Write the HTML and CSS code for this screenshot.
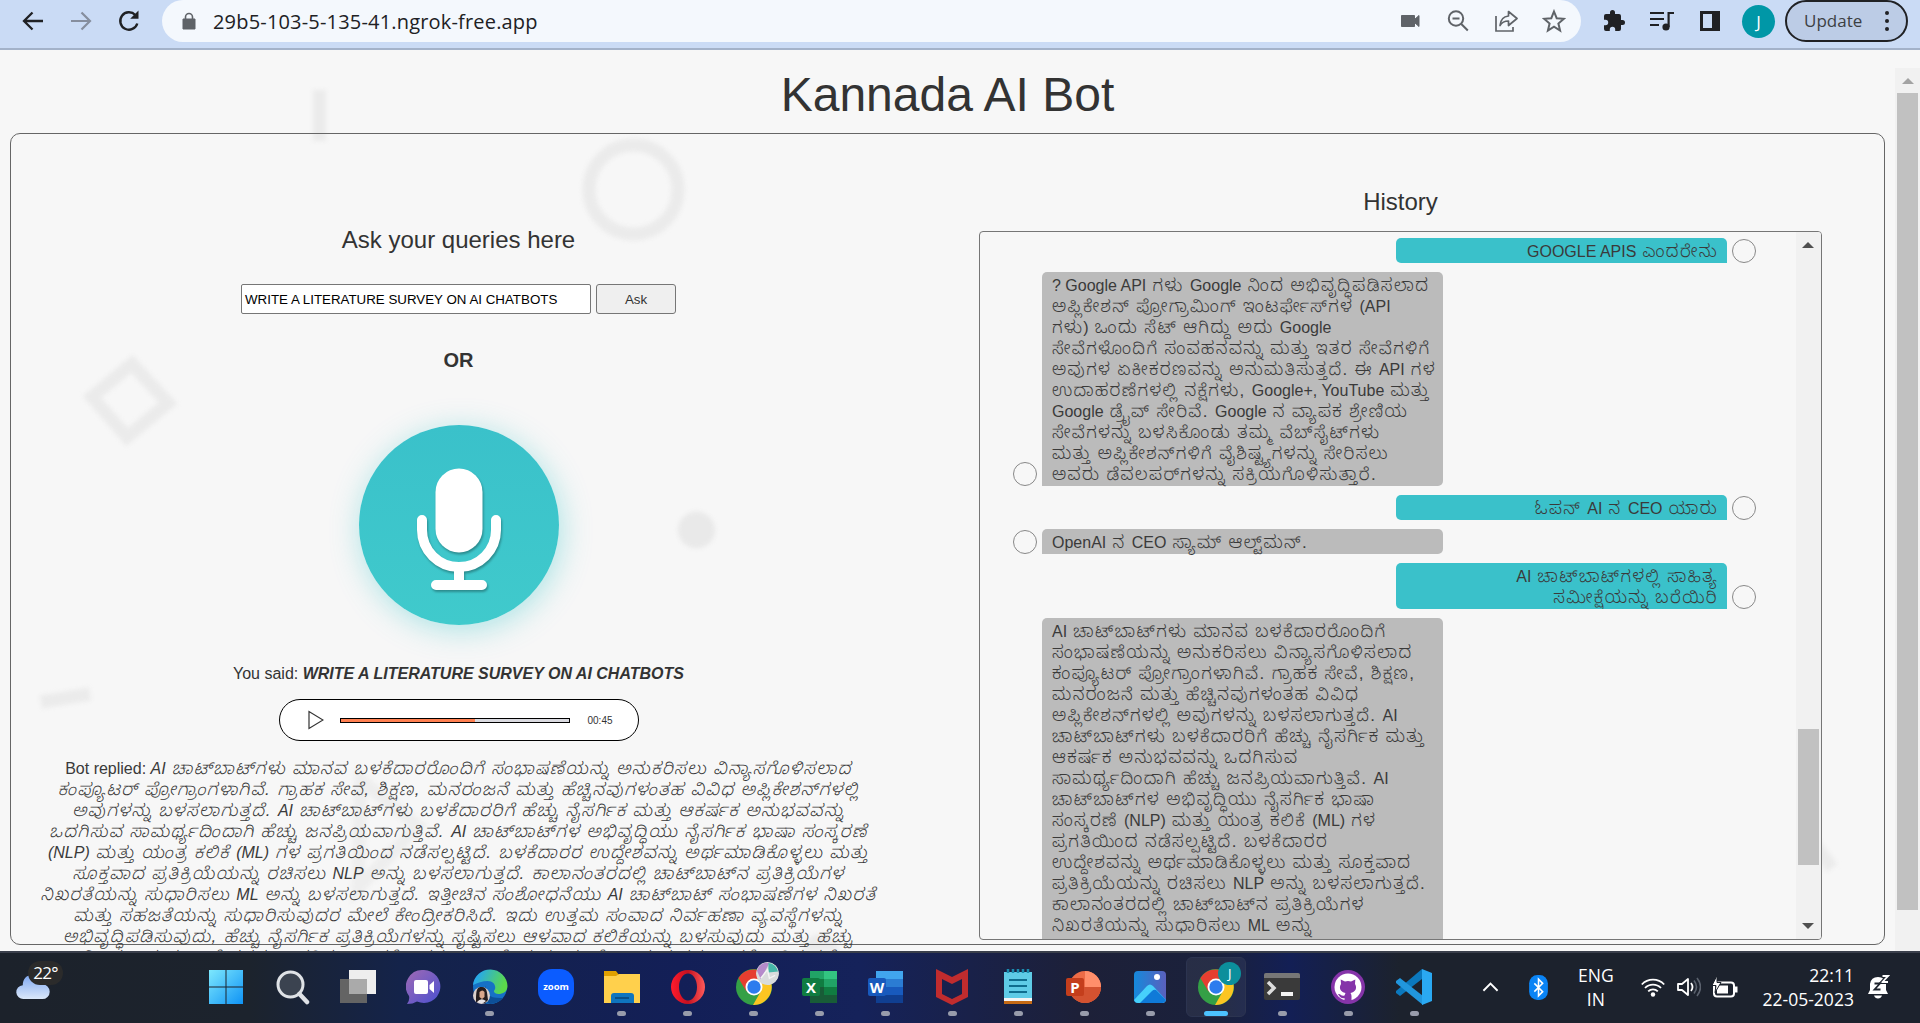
FILE: index.html
```
<!DOCTYPE html>
<html lang="kn">
<head>
<meta charset="utf-8">
<title>Kannada AI Bot</title>
<link rel="stylesheet" href="styles.css">
</head>
<body>
<header class="toolbar">
  <svg class="nav" viewBox="0 0 24 24"><path d="M22 12H3M11.500 3.500L3 12l8.500 8.500" fill="none" stroke="#202124" stroke-width="2.300"/></svg>
  <svg class="nav" viewBox="0 0 24 24"><path d="M2 12h19M12.500 3.500L21 12l-8.500 8.500" fill="none" stroke="#868e9e" stroke-width="2.200"/></svg>
  <svg class="nav" viewBox="0 0 24 24"><path d="M20.300 14.500A8.700 8.700 0 1 1 18.300 6" fill="none" stroke="#202124" stroke-width="2.400"/><path d="M21.500 1.500v8.300h-8.300z" fill="#202124"/></svg>
  <div class="address">
    <svg class="lock" viewBox="0 0 14 18"><path d="M1 7h12v10H1z" fill="#5f6368" stroke="#5f6368" stroke-linejoin="round"/><path d="M3.500 7V5a3.500 3.500 0 0 1 7 0v2" fill="none" stroke="#5f6368" stroke-width="1.600"/></svg>
    <span class="url">29b5-103-5-135-41.ngrok-free.app</span>
    <div class="address-icons">
      <svg viewBox="0 0 24 24"><path d="M3.500 6.500h13v4l4.500-4v11l-4.500-4v4h-13z" fill="#5f6368" stroke="#5f6368" stroke-linejoin="round"/></svg>
      <svg viewBox="0 0 24 24"><g fill="none" stroke="#5f6368" stroke-width="2"><circle cx="10" cy="9.500" r="7.200"/><path d="M6.500 9.500h7M15.300 15l6.500 6.500"/></g></svg>
      <svg viewBox="0 0 24 24"><g fill="none" stroke="#5f6368" stroke-width="1.700"><path d="M2 7v15h17v-4"/><path d="M14.500 2.500L23 9.500l-8.500 7V12c-4 0-6.500 1-8.500 4.500C6.500 11 9.500 7.500 14.500 7z" stroke-linejoin="round"/></g></svg>
      <svg viewBox="0 0 24 24"><path d="M12 2.500l2.700 6.700 7.200.6-5.500 4.700 1.700 7-6.100-3.800-6.100 3.800 1.700-7-5.500-4.700 7.200-.6z" fill="none" stroke="#5f6368" stroke-width="2"/></svg>
    </div>
  </div>
  <div class="extensions">
    <svg viewBox="0 0 24 24"><path d="M20.500 11H19V7a2 2 0 0 0-2-2h-4V3.500a2.500 2.500 0 0 0-5 0V5H4a2 2 0 0 0-2 2v3.800h1.500a2.700 2.700 0 0 1 0 5.400H2V20a2 2 0 0 0 2 2h3.800v-1.500a2.700 2.700 0 0 1 5.400 0V22H17a2 2 0 0 0 2-2v-4h1.500a2.500 2.500 0 0 0 0-5z" fill="#202124"/></svg>
    <svg viewBox="0 0 24 24"><path d="M0 4h14M0 10h14M0 16h9" stroke="#202124" stroke-width="2.200"/><circle cx="16" cy="18" r="3.600" fill="#202124"/><path d="M18.600 18V4H24" fill="none" stroke="#202124" stroke-width="2.200"/></svg>
    <svg viewBox="0 0 24 24"><path d="M2 2h20v20H2zM5 5v14h9V5z" fill="#202124" fill-rule="evenodd"/></svg>
  </div>
  <span class="profile">J</span>
  <div class="update">Update<span class="dots"><i></i><i></i><i></i></span></div>
</header>

<main class="viewport">
  <svg class="shapes" viewBox="0 0 1895 901">
    <g fill="none" stroke="#ebebeb" stroke-width="13">
      <path d="M319.500 40v51"/>
      <circle cx="633.500" cy="139.500" r="44.500"/>
      <path d="M132 314l36 39-41 34-35-40z"/>
      <path d="M41 652l49-8"/>
      <path d="M361 730l57 46-60 62z" stroke="#eeeeee"/>
      <path d="M1808 786l24 32"/>
    </g>
    <circle cx="696.500" cy="480" r="18.500" fill="#e9e9e9"/>
    <circle cx="821" cy="902" r="18" fill="#ebebeb"/>
  </svg>
  <div class="page">
    <h1>Kannada AI Bot</h1>
    <div class="card">
      <section class="ask">
        <h2>Ask your queries here</h2>
        <div class="form"><div class="query">WRITE A LITERATURE SURVEY ON AI CHATBOTS</div><div class="button">Ask</div></div>
        <div class="or">OR</div>
        <div class="mic">
          <svg viewBox="0 0 200 200"><rect x="76.500" y="43.500" width="47" height="84" rx="23.500" fill="#fff"/><path d="M63 95v10a37 37 0 0 0 74 0V95M100 142v18M77 160h46" fill="none" stroke="#fff" stroke-width="10" stroke-linecap="round"/></svg>
        </div>
        <p class="said">You said: <b>WRITE A LITERATURE SURVEY ON AI CHATBOTS</b></p>
        <div class="player">
          <svg viewBox="0 0 16 20"><path d="M1 1.500v17L15 10z" fill="#fff" stroke="#333" stroke-width="1.200"/></svg>
          <div class="track"><div class="played"></div></div>
          <span>00:45</span>
        </div>
        <div class="kn reply">
          <div><span class="en plain">Bot replied: </span><span class="en">AI</span> ಚಾಟ್‌ಬಾಟ್‌ಗಳು ಮಾನವ ಬಳಕೆದಾರರೊಂದಿಗೆ ಸಂಭಾಷಣೆಯನ್ನು ಅನುಕರಿಸಲು ವಿನ್ಯಾಸಗೊಳಿಸಲಾದ</div>
          <div>ಕಂಪ್ಯೂಟರ್ ಪ್ರೋಗ್ರಾಂಗಳಾಗಿವೆ. ಗ್ರಾಹಕ ಸೇವೆ, ಶಿಕ್ಷಣ, ಮನರಂಜನೆ ಮತ್ತು ಹೆಚ್ಚಿನವುಗಳಂತಹ ವಿವಿಧ ಅಪ್ಲಿಕೇಶನ್‌ಗಳಲ್ಲಿ</div>
          <div>ಅವುಗಳನ್ನು ಬಳಸಲಾಗುತ್ತದೆ. <span class="en">AI</span> ಚಾಟ್‌ಬಾಟ್‌ಗಳು ಬಳಕೆದಾರರಿಗೆ ಹೆಚ್ಚು ನೈಸರ್ಗಿಕ ಮತ್ತು ಆಕರ್ಷಕ ಅನುಭವವನ್ನು</div>
          <div>ಒದಗಿಸುವ ಸಾಮರ್ಥ್ಯದಿಂದಾಗಿ ಹೆಚ್ಚು ಜನಪ್ರಿಯವಾಗುತ್ತಿವೆ. <span class="en">AI</span> ಚಾಟ್‌ಬಾಟ್‌ಗಳ ಅಭಿವೃದ್ಧಿಯು ನೈಸರ್ಗಿಕ ಭಾಷಾ ಸಂಸ್ಕರಣೆ</div>
          <div><span class="en">(NLP)</span> ಮತ್ತು ಯಂತ್ರ ಕಲಿಕೆ <span class="en">(ML)</span> ಗಳ ಪ್ರಗತಿಯಿಂದ ನಡೆಸಲ್ಪಟ್ಟಿದೆ. ಬಳಕೆದಾರರ ಉದ್ದೇಶವನ್ನು ಅರ್ಥಮಾಡಿಕೊಳ್ಳಲು ಮತ್ತು</div>
          <div>ಸೂಕ್ತವಾದ ಪ್ರತಿಕ್ರಿಯೆಯನ್ನು ರಚಿಸಲು <span class="en">NLP</span> ಅನ್ನು ಬಳಸಲಾಗುತ್ತದೆ. ಕಾಲಾನಂತರದಲ್ಲಿ ಚಾಟ್‌ಬಾಟ್‌ನ ಪ್ರತಿಕ್ರಿಯೆಗಳ</div>
          <div>ನಿಖರತೆಯನ್ನು ಸುಧಾರಿಸಲು <span class="en">ML</span> ಅನ್ನು ಬಳಸಲಾಗುತ್ತದೆ. ಇತ್ತೀಚಿನ ಸಂಶೋಧನೆಯು <span class="en">AI</span> ಚಾಟ್‌ಬಾಟ್ ಸಂಭಾಷಣೆಗಳ ನಿಖರತೆ</div>
          <div>ಮತ್ತು ಸಹಜತೆಯನ್ನು ಸುಧಾರಿಸುವುದರ ಮೇಲೆ ಕೇಂದ್ರೀಕರಿಸಿದೆ. ಇದು ಉತ್ತಮ ಸಂವಾದ ನಿರ್ವಹಣಾ ವ್ಯವಸ್ಥೆಗಳನ್ನು</div>
          <div>ಅಭಿವೃದ್ಧಿಪಡಿಸುವುದು, ಹೆಚ್ಚು ನೈಸರ್ಗಿಕ ಪ್ರತಿಕ್ರಿಯೆಗಳನ್ನು ಸೃಷ್ಟಿಸಲು ಆಳವಾದ ಕಲಿಕೆಯನ್ನು ಬಳಸುವುದು ಮತ್ತು ಹೆಚ್ಚು</div>
          <div>ನಿಖರವಾದ ಪ್ರತಿಕ್ರಿಯೆಗಳನ್ನು ಒದಗಿಸಲು ಬಳಕೆದಾರರ ಪ್ರತಿಕ್ರಿಯೆಯನ್ನು ಸಂಯೋಜಿಸುವುದನ್ನು ಒಳಗೊಂಡಿರುತ್ತದೆ</div>
        </div>
      </section>
      <section class="history">
        <h2>History</h2>
        <div class="log">
          <div class="messages kn">
            <div class="row user"><div class="bubble"><div><span class="en">GOOGLE APIS</span> ಎಂದರೇನು</div></div><i class="avatar"></i></div>
            <div class="row"><i class="avatar"></i><div class="bubble">
              <div><span class="en">? Google API</span> ಗಳು <span class="en">Google</span> ನಿಂದ ಅಭಿವೃದ್ಧಿಪಡಿಸಲಾದ</div>
              <div>ಅಪ್ಲಿಕೇಶನ್ ಪ್ರೋಗ್ರಾಮಿಂಗ್ ಇಂಟರ್ಫೇಸ್‌ಗಳ <span class="en">(API</span></div>
              <div>ಗಳು<span class="en">)</span> ಒಂದು ಸೆಟ್ ಆಗಿದ್ದು ಅದು <span class="en">Google</span></div>
              <div>ಸೇವೆಗಳೊಂದಿಗೆ ಸಂವಹನವನ್ನು ಮತ್ತು ಇತರ ಸೇವೆಗಳಿಗೆ</div>
              <div>ಅವುಗಳ ಏಕೀಕರಣವನ್ನು ಅನುಮತಿಸುತ್ತದೆ. ಈ <span class="en">API</span> ಗಳ</div>
              <div>ಉದಾಹರಣೆಗಳಲ್ಲಿ ನಕ್ಷೆಗಳು, <span class="en">Google+, YouTube</span> ಮತ್ತು</div>
              <div><span class="en">Google</span> ಡ್ರೈವ್ ಸೇರಿವೆ. <span class="en">Google</span> ನ ವ್ಯಾಪಕ ಶ್ರೇಣಿಯ</div>
              <div>ಸೇವೆಗಳನ್ನು ಬಳಸಿಕೊಂಡು ತಮ್ಮ ವೆಬ್‌ಸೈಟ್‌ಗಳು</div>
              <div>ಮತ್ತು ಅಪ್ಲಿಕೇಶನ್‌ಗಳಿಗೆ ವೈಶಿಷ್ಟ್ಯಗಳನ್ನು ಸೇರಿಸಲು</div>
              <div>ಅವರು ಡೆವಲಪರ್‌ಗಳನ್ನು ಸಕ್ರಿಯಗೊಳಿಸುತ್ತಾರೆ.</div>
            </div></div>
            <div class="row user"><div class="bubble"><div>ಓಪನ್ <span class="en">AI</span> ನ <span class="en">CEO</span> ಯಾರು</div></div><i class="avatar"></i></div>
            <div class="row"><i class="avatar"></i><div class="bubble"><div><span class="en">OpenAI</span> ನ <span class="en">CEO</span> ಸ್ಯಾಮ್ ಆಲ್ಟ್‌ಮನ್.</div></div></div>
            <div class="row user"><div class="bubble"><div><span class="en">AI</span> ಚಾಟ್‌ಬಾಟ್‌ಗಳಲ್ಲಿ ಸಾಹಿತ್ಯ</div><div>ಸಮೀಕ್ಷೆಯನ್ನು ಬರೆಯಿರಿ</div></div><i class="avatar"></i></div>
            <div class="row"><i class="avatar"></i><div class="bubble last">
              <div><span class="en">AI</span> ಚಾಟ್‌ಬಾಟ್‌ಗಳು ಮಾನವ ಬಳಕೆದಾರರೊಂದಿಗೆ</div>
              <div>ಸಂಭಾಷಣೆಯನ್ನು ಅನುಕರಿಸಲು ವಿನ್ಯಾಸಗೊಳಿಸಲಾದ</div>
              <div>ಕಂಪ್ಯೂಟರ್ ಪ್ರೋಗ್ರಾಂಗಳಾಗಿವೆ. ಗ್ರಾಹಕ ಸೇವೆ, ಶಿಕ್ಷಣ,</div>
              <div>ಮನರಂಜನೆ ಮತ್ತು ಹೆಚ್ಚಿನವುಗಳಂತಹ ವಿವಿಧ</div>
              <div>ಅಪ್ಲಿಕೇಶನ್‌ಗಳಲ್ಲಿ ಅವುಗಳನ್ನು ಬಳಸಲಾಗುತ್ತದೆ. <span class="en">AI</span></div>
              <div>ಚಾಟ್‌ಬಾಟ್‌ಗಳು ಬಳಕೆದಾರರಿಗೆ ಹೆಚ್ಚು ನೈಸರ್ಗಿಕ ಮತ್ತು</div>
              <div>ಆಕರ್ಷಕ ಅನುಭವವನ್ನು ಒದಗಿಸುವ</div>
              <div>ಸಾಮರ್ಥ್ಯದಿಂದಾಗಿ ಹೆಚ್ಚು ಜನಪ್ರಿಯವಾಗುತ್ತಿವೆ. <span class="en">AI</span></div>
              <div>ಚಾಟ್‌ಬಾಟ್‌ಗಳ ಅಭಿವೃದ್ಧಿಯು ನೈಸರ್ಗಿಕ ಭಾಷಾ</div>
              <div>ಸಂಸ್ಕರಣೆ <span class="en">(NLP)</span> ಮತ್ತು ಯಂತ್ರ ಕಲಿಕೆ <span class="en">(ML)</span> ಗಳ</div>
              <div>ಪ್ರಗತಿಯಿಂದ ನಡೆಸಲ್ಪಟ್ಟಿದೆ. ಬಳಕೆದಾರರ</div>
              <div>ಉದ್ದೇಶವನ್ನು ಅರ್ಥಮಾಡಿಕೊಳ್ಳಲು ಮತ್ತು ಸೂಕ್ತವಾದ</div>
              <div>ಪ್ರತಿಕ್ರಿಯೆಯನ್ನು ರಚಿಸಲು <span class="en">NLP</span> ಅನ್ನು ಬಳಸಲಾಗುತ್ತದೆ.</div>
              <div>ಕಾಲಾನಂತರದಲ್ಲಿ ಚಾಟ್‌ಬಾಟ್‌ನ ಪ್ರತಿಕ್ರಿಯೆಗಳ</div>
              <div>ನಿಖರತೆಯನ್ನು ಸುಧಾರಿಸಲು <span class="en">ML</span> ಅನ್ನು</div>
            </div></div>
          </div>
          <div class="log-bar"><i class="up"></i><i class="thumb"></i><i class="down"></i></div>
        </div>
      </section>
    </div>
  </div>
  <div class="page-bar"><i class="up"></i><i class="thumb"></i></div>
</main>

<footer class="taskbar">
  <div class="weather">
    <svg viewBox="0 0 36 28"><defs><linearGradient id="cl" x2="0" y2="1"><stop stop-color="#7fa8f0"/><stop offset="1" stop-color="#dbe8fa"/></linearGradient></defs><path d="M8 27a7.500 7.500 0 0 1-1-15C7 5 11 1 17 1s10 4 11 10a8 8 0 0 1 0 16z" fill="url(#cl)"/></svg>
    <span>22°</span>
  </div>
  <div class="apps">
    <div class="app"><svg viewBox="0 0 36 36"><defs><linearGradient id="wn" x2="1" y2="1"><stop stop-color="#7de8fd"/><stop offset="1" stop-color="#0f93f5"/></linearGradient></defs><path d="M1 1h16.500v16.500H1zM18.500 1H35v16.500H18.500zM1 18.500h16.500V35H1zM18.500 18.500H35V35H18.500z" fill="url(#wn)"/></svg></div>
    <div class="app"><svg viewBox="0 0 36 36"><circle cx="16.500" cy="15.500" r="12.500" fill="#3b4350" stroke="#dfe2e6" stroke-width="3"/><path d="M25.500 25l7.500 8" stroke="#dfe2e6" stroke-width="4.500" stroke-linecap="round"/></svg></div>
    <div class="app"><svg viewBox="0 0 36 36"><path d="M0 10h27v24H0z" fill="#646464"/><path d="M9 1h27v24H9z" fill="#eee"/><path d="M9 10h18v15H9z" fill="#aaa"/></svg></div>
    <div class="app"><svg viewBox="0 0 36 36"><defs><linearGradient id="ch" x2="1" y2="1"><stop stop-color="#a06ab4"/><stop offset="1" stop-color="#4a50d0"/></linearGradient></defs><path d="M18 1a16.500 16.500 0 1 1-7 31.500Q7 35 1 35q3-4 2-8A16.500 16.500 0 0 1 18 1z" fill="url(#ch)"/><rect x="8" y="11" width="14" height="14" rx="2" fill="#fff"/><path d="M23.500 16l4.500-4v12l-4.500-4z" fill="#fff"/></svg></div>
    <div class="app"><svg viewBox="0 0 36 36"><defs><linearGradient id="ed" x2="1" y2=".3"><stop offset=".2" stop-color="#28a9e8"/><stop offset="1" stop-color="#5bd94a"/></linearGradient></defs><circle cx="18" cy="18" r="17" fill="#1671c5"/><path d="M1 16A17.300 17.300 0 0 1 35.500 17c0 6-5 8-9 8-3 0-6-2-4-4 2-3 0-9-7-9-5 0-10 2-14.500 4z" fill="url(#ed)"/><path d="M14 17c-3 7 4 13 17 12l-2 2c-4 3-9 4-11 4-8-3-10-12-4-18z" fill="#0d4f98"/><circle cx="9.500" cy="26.500" r="8.500" fill="#dcd0cb"/><path d="M4 33c0-13 1-15 6-15s5 5 6 13l-3 3z" fill="#251c1d"/><path d="M7.500 23q3-3 5 0v5l-2.500 2-2.500-2z" fill="#d9a78b"/><path d="M5 33q4-5 9-1-4 4-9 1z" fill="#e8e3e5"/></svg><i class="run"></i></div>
    <div class="app"><svg viewBox="0 0 36 36"><rect x="0" y="0" width="36" height="36" rx="14" fill="#0b5cff"/><text x="18" y="21" text-anchor="middle" class="zoom-word">zoom</text></svg></div>
    <div class="app"><svg viewBox="0 0 36 36"><path d="M0 2h12l3 4h20v10H0z" fill="#e0a000"/><path d="M0 7h12l3-2h21v29H0z" fill="#ffd04c"/><path d="M7 34v-7q0-3 3-3h17q3 0 3 3v7z" fill="#0f75bf"/><path d="M11 29h14" stroke="#0a5089" stroke-width="2"/></svg><i class="run"></i></div>
    <div class="app"><svg viewBox="0 0 36 36"><defs><linearGradient id="op" x2="1"><stop stop-color="#ff1b2d"/><stop offset=".5" stop-color="#c4101f"/><stop offset="1" stop-color="#ff5a5a"/></linearGradient></defs><path d="M18 1a17 17 0 1 0 0 34 17 17 0 1 0 0-34zm0 3.500c5 0 9 6 9 13.500s-4 13.500-9 13.500S9 25.500 9 18 13 4.500 18 4.500z" fill="url(#op)" fill-rule="evenodd"/></svg><i class="run"></i></div>
    <div class="app"><svg viewBox="0 0 36 36"><use href="#chrome"/></svg><svg class="badge" viewBox="0 0 24 24"><circle cx="12" cy="12" r="12" fill="#d9dcdc"/><path d="M1 9A11 11 0 0 1 14 1L5 18z" fill="#b58acb"/><path d="M13 1a11 11 0 0 1 10 9L13 11z" fill="#46b7a8"/><path d="M5 17l7-9 2 9 6-3" fill="none" stroke="#f3f3f3" stroke-width="1.500"/></svg><i class="run"></i></div>
    <div class="app"><svg viewBox="0 0 36 36"><path d="M8 2h14v8H8z" fill="#21a366"/><path d="M22 2h13v8H22z" fill="#33c481"/><path d="M8 10h14v8H8z" fill="#107c41"/><path d="M22 10h13v8H22z" fill="#21a366"/><path d="M8 18h27v16H8z" fill="#185c37"/><path d="M22 18h13v8H22z" fill="#107c41"/><rect y="9" width="18" height="18" rx="2" fill="#107c41"/><text x="9" y="24" text-anchor="middle" class="letter">X</text></svg><i class="run"></i></div>
    <div class="app"><svg viewBox="0 0 36 36"><path d="M8 2h27v8H8z" fill="#41a5ee"/><path d="M8 10h27v8H8z" fill="#2b7cd3"/><path d="M8 18h27v8H8z" fill="#185abd"/><path d="M8 26h27v8H8z" fill="#103f91"/><rect y="9" width="18" height="18" rx="2" fill="#185abd"/><text x="9" y="24" text-anchor="middle" class="letter">W</text></svg><i class="run"></i></div>
    <div class="app"><svg viewBox="0 0 36 36"><path d="M2 0l16 8 16-8v28l-16 8-16-8zM8 10v15l10 5 10-5V10l-10 5z" fill="#c02c2e" fill-rule="evenodd"/></svg><i class="run"></i></div>
    <div class="app"><svg viewBox="0 0 36 36"><path d="M4 3h28v31H4z" fill="#5fcbe6"/><path d="M4 29h28v3H4z" fill="#f4f4f4"/><path d="M4 32h28v3H4z" fill="#c56a14"/><path d="M9 11h18M9 17h18M9 23h18" stroke="#0f6d8e" stroke-width="2"/><path d="M8 0v4M13 0v4M18 0v4M23 0v4M28 0v4" stroke="#1b8bae" stroke-width="2.500"/></svg><i class="run"></i></div>
    <div class="app"><svg viewBox="0 0 36 36"><circle cx="19" cy="18" r="16" fill="#ed6c47"/><path d="M19 2a16 16 0 0 1 16 16H19z" fill="#ff8f6b"/><path d="M35 18a16 16 0 0 1-32 0z" fill="#d35230"/><rect y="9" width="18" height="18" rx="2" fill="#c43e1c"/><text x="9" y="24" text-anchor="middle" class="letter">P</text></svg><i class="run"></i></div>
    <div class="app"><svg viewBox="0 0 36 36"><defs><linearGradient id="ph" x2="1"><stop stop-color="#1589dc"/><stop offset="1" stop-color="#5a60bd"/></linearGradient></defs><rect x="2" y="2" width="32" height="32" rx="4" fill="url(#ph)"/><path d="M2 31l13-14q3-3 6 0l13 14q-1 3-4 3H6q-3 0-4-3z" fill="#46d0fb"/><path d="M8 34l12-12q2-2 4-1l10 10q-1 3-4 3z" fill="#0f7ad8"/><circle cx="25" cy="8" r="3" fill="#fff"/></svg><i class="run"></i></div>
    <div class="app active"><svg viewBox="0 0 36 36"><g id="chrome"><circle cx="18" cy="18" r="18" fill="#34a046"/><path d="M2.400 9l8 13.500L18 10h15.600A18 18 0 0 0 2.400 9z" fill="#e63e30"/><path d="M25 22L17 36A18 18 0 0 0 33.800 10H20z" fill="#fcc522"/><circle cx="18" cy="18" r="8.500" fill="#fff"/><circle cx="18" cy="18" r="6.700" fill="#2d7cee"/></g></svg><span class="badge teal">J</span><i class="run"></i></div>
    <div class="app"><svg viewBox="0 0 36 36"><rect x="0" y="4" width="36" height="27" rx="2" fill="#3a3a3a"/><path d="M0 9V6q0-2 2-2h32q2 0 2 2v3z" fill="#777"/><path d="M4 13l6 6-6 6" fill="none" stroke="#ddd" stroke-width="3.500"/><path d="M17 23h12v4H17z" fill="#f2f2f2"/></svg><i class="run"></i></div>
    <div class="app"><svg viewBox="0 0 36 36"><circle cx="18" cy="18" r="17" fill="#8534a9"/><circle cx="18" cy="18" r="13.500" fill="#fff"/><path d="M14.500 32v-3c-4 1-5-2-6.500-4 3-.5 3 2.500 6.500 1.500l1-2.500c-5-1-7-5-4.500-9l-.3-4.500 4.300 2q3-1 6 0l4.300-2L25 15c2.500 4 .5 8-4.500 9q1 1.500 1 3v5z" fill="#8534a9"/></svg><i class="run"></i></div>
    <div class="app"><svg viewBox="0 0 36 36"><path d="M26 0v10L4 27l-4-3v-2z" fill="#0b78bd"/><path d="M0 12l4-3 23 18v9L0 14z" fill="#2196dd"/><path d="M26 0l10 4v28l-10 4z" fill="#2aa9f2"/></svg><i class="run"></i></div>
  </div>
  <div class="tray">
    <svg class="chev" viewBox="0 0 18 10"><path d="M1.500 9L9 1.500 16.500 9" fill="none" stroke="#fff" stroke-width="2"/></svg>
    <svg class="bt" viewBox="0 0 18 24"><rect width="18" height="24" rx="8" fill="#0a84f5"/><path d="M5 8l8 8-4 4V4l4 4-8 8" fill="none" stroke="#fff" stroke-width="1.500"/></svg>
    <div class="lang">ENG<br>IN</div>
    <svg class="wifi" viewBox="0 0 24 20"><g fill="none" stroke="#fff" stroke-width="1.800"><path d="M.8 7.500a15.500 15.500 0 0 1 22.400 0M4 11a11 11 0 0 1 16 0M7.200 14.300a6.800 6.800 0 0 1 9.600 0"/></g><circle cx="12" cy="17.500" r="2.200" fill="#fff"/></svg>
    <svg class="vol" viewBox="0 0 24 20"><path d="M1 7h4l6-5v16l-6-5H1z" fill="none" stroke="#fff" stroke-width="1.800" stroke-linejoin="round"/><path d="M14 6q3 4 0 8" fill="none" stroke="#fff" stroke-width="1.800"/><path d="M17 3.500q5 6.500 0 13M20 1q7 9 0 18" fill="none" stroke="#5b626e" stroke-width="1.600"/></svg>
    <svg class="bat" viewBox="0 0 26 22"><rect x="2" y="6" width="20" height="14" rx="3" fill="none" stroke="#fff" stroke-width="2"/><path d="M23 10h2.500v6H23z" fill="#fff"/><path d="M5 9h11v8H5z" fill="#fff"/><path d="M5-1L0 9h4l-1 7L9 6H5z" fill="#fff" stroke="#1c222c" stroke-width="1"/></svg>
    <div class="clock">22:11<br>22-05-2023</div>
    <svg class="bell" viewBox="0 0 22 24"><path d="M0 19l2-4V9q1-7 8-7t8 7v6l2 4zM6 20.500h8q-1 3-4 3t-4-3z" fill="#fff"/><path d="M14.500 1H20l-5.500 6H20" fill="none" stroke="#1c222c" stroke-width="4"/><path d="M14.500 1H20l-5.500 6H20" fill="none" stroke="#fff" stroke-width="1.800"/><path d="M6.500 8.500h5.500l-5.500 6h6" fill="none" stroke="#1c222c" stroke-width="1.800"/></svg>
  </div>
</footer>
</body>
</html>
```
FILE: styles.css
```
* { box-sizing: border-box; }
body {
  margin: 0;
  width: 1920px;
  height: 1023px;
  overflow: hidden;
  display: flex;
  flex-direction: column;
  background: #f7f7f7;
  color: #333;
  font-family: "Liberation Sans", "Noto Sans Kannada", sans-serif;
}
h1, h2, p { margin: 0; font-weight: 400; }
svg { display: block; flex: none; }

/* browser toolbar */
.toolbar {
  height: 50px;
  flex: none;
  display: flex;
  align-items: flex-start;
  background: #cadbf5;
  border-bottom: 2px solid #a3b2c9;
  padding-left: 21px;
  font-family: "Open Sans", sans-serif;
}
.nav { width: 24px; height: 24px; margin: 9px 24px 0 0; }
.address {
  width: 1419px;
  height: 42px;
  margin-left: -3px;
  border-radius: 21px;
  background: #f4f8fd;
  display: flex;
  align-items: center;
  padding: 0 15px 0 20px;
}
.lock { width: 14px; height: 18px; }
.url { margin: 0 auto 0 17px; font-size: 20px; letter-spacing: 0.18px; color: #202124; }
.address-icons { display: flex; gap: 24px; }
.address-icons svg { width: 24px; height: 24px; }
.extensions { display: flex; gap: 24px; margin: 9px 0 0 21px; }
.extensions svg { width: 24px; height: 24px; }
.profile {
  width: 33px;
  height: 33px;
  margin: 5px 0 0 20px;
  border-radius: 50%;
  background: #0097a7;
  color: #fff;
  font-size: 17px;
  line-height: 33px;
  text-align: center;
}
.update {
  width: 123px;
  height: 42px;
  margin-left: 10px;
  border: 2px solid #202124;
  border-radius: 21px;
  background: #bccce6;
  display: flex;
  align-items: center;
  justify-content: space-between;
  padding: 0 17px 1px 17px;
  color: #3c4043;
  font-size: 17px;
}
.dots { display: grid; gap: 4px; }
.dots i { width: 4px; height: 4px; border-radius: 50%; background: #202124; }

/* page */
.viewport { height: 901px; flex: none; display: flex; position: relative; overflow: hidden; }
.shapes { position: absolute; left: 0; top: 0; width: 1895px; height: 901px; filter: blur(2px); }
.page { width: 1895px; padding: 17px 10px 0; position: relative; }
h1 { font-size: 48px; line-height: 56px; text-align: center; }
.card {
  height: 812px;
  margin-top: 10px;
  border: 1px solid #666;
  border-radius: 10px;
  display: grid;
  grid-template-columns: 895px 843px;
  column-gap: 73px;
}
h2 { font-size: 24px; line-height: 28px; }
.ask { display: flex; flex-direction: column; align-items: center; padding-top: 92px; }
.form { display: flex; gap: 5px; margin-top: 30px; font-size: 13.33px; line-height: 29px; }
.query { width: 350px; height: 30px; border: 1px solid #767676; border-radius: 2px; background: #fff; color: #000; padding-left: 3px; }
.button { width: 80px; height: 30px; border: 1px solid #767676; border-radius: 3px; background: #efefef; text-align: center; }
.or { margin-top: 34px; font-size: 20px; line-height: 24px; font-weight: 700; }
.mic {
  width: 200px;
  height: 200px;
  margin-top: 53px;
  flex: none;
  border-radius: 50%;
  background: linear-gradient(#3ac1ca, #40cacc);
  box-shadow: 2px 5px 30px rgba(64, 201, 204, .42);
}
.mic svg { filter: drop-shadow(1px 2px 1px rgba(0, 0, 0, .3)); }
.said { margin-top: 38px; font-size: 16px; line-height: 21px; }
.said b { font-style: italic; }
.player {
  width: 360px;
  height: 42px;
  margin-top: 15px;
  flex: none;
  border: 1px solid #000;
  border-radius: 21px;
  background: #fff;
  display: flex;
  align-items: center;
  padding-left: 28px;
  font-size: 10px;
}
.player svg { width: 16px; height: 20px; }
.track { width: 230px; height: 5px; margin: 0 18px 0 16px; border: 1px solid #000; background: #dadae0; }
.played { width: 134px; height: 100%; background: #ff7f50; }

.kn { font-size: 17px; line-height: 21px; letter-spacing: 1.42px; font-weight: 300; color: #3a3a3a; white-space: nowrap; }
.kn .bubble > div, .reply > div { height: 21px; }
.en { font-size: 16px; font-weight: 400; letter-spacing: 0; line-height: 21px; }
.reply { margin-top: 17px; text-align: center; font-style: italic; height: 210px; letter-spacing: 1.42px; }
.plain { font-style: normal; }

.history { padding-top: 54px; text-align: center; }
.log {
  height: 709px;
  margin-top: 15px;
  border: 1px solid #767676;
  border-radius: 4px;
  display: flex;
  overflow: hidden;
  text-align: left;
}
.messages { width: 816px; padding: 6px 40px 0 33px; display: flex; flex-direction: column; gap: 9px; }
.row { display: flex; align-items: flex-end; gap: 5px; flex: none; }
.row.user { justify-content: flex-end; }
.bubble { width: 401px; padding: 3px 10px 1px; background: #bbb; border-radius: 5px 5px 5px 0; }
.bubble.last { min-height: 560px; }
.user .bubble { width: 331px; padding-right: 9px; background: #3ac1ca; border-radius: 5px 5px 0 5px; text-align: right; }
.avatar { width: 24px; height: 24px; flex: none; border: 1px solid #888; border-radius: 50%; }
.log-bar { width: 25px; background: #f1f1f1; display: flex; flex-direction: column; align-items: center; padding: 10px 1px 10px 0; }
.up, .down { border: 6px solid transparent; width: 0; height: 0; border-top: 0; border-bottom: 6px solid #505050; }
.down { border-top: 6px solid #505050; border-bottom: 0; margin-top: auto; }
.log-bar .thumb { width: 21px; height: 136px; margin-top: 481px; background: #c1c1c1; }
.page-bar { width: 25px; margin-top: 18px; background: #f1f1f1; display: flex; flex-direction: column; align-items: center; padding-top: 10px; }
.page-bar .up { border-bottom-color: #a3a3a3; }
.page-bar .thumb { width: 21px; height: 817px; margin-top: 9px; background: #c1c1c1; }

/* taskbar */
.taskbar {
  height: 72px;
  flex: none;
  display: flex;
  border-top: 2px solid #3a3f4b;
  background: linear-gradient(90deg, #1c222b 0, #1c232d 250px, #14234a 400px, #131f57 680px, #15225a 860px, #1d2038 1080px, #1a213c 1220px, #131f55 1290px, #1c222d 1400px, #1c222d 100%);
  color: #fff;
  font-family: "Open Sans", sans-serif;
}
.weather { width: 192.500px; position: relative; padding: 21px 0 0 15px; }
.weather svg { width: 36px; height: 26px; }
.weather span { position: absolute; left: 28px; top: 8px; width: 35px; height: 24px; border-radius: 12px; background: #2b2b2b; font-size: 17px; line-height: 24px; text-align: center; letter-spacing: -0.7px; }
.apps { display: flex; }
.app { width: 66.050px; height: 60px; margin-top: 4px; display: flex; justify-content: center; position: relative; padding-top: 12px; }
.app > svg { width: 36px; height: 36px; }
.app.active::before { content: ""; position: absolute; inset: 0 3px; border: 1px solid #2c3450; border-radius: 6px; background: rgba(255, 255, 255, .06); }
.app.active > svg { position: relative; }
.run { position: absolute; bottom: 1px; left: calc(50% - 4.500px); width: 9px; height: 5px; border-radius: 3px; background: #989cab; }
.active .run { width: 24px; left: calc(50% - 12px); background: #4cc2ff; }
.app > .badge { position: absolute; left: 35px; top: 5px; width: 23px; height: 23px; border-radius: 50%; }
.teal { background: #0c8f9c; font-size: 13px; line-height: 23px; text-align: center; }
.zoom-word { font: 700 9.500px "Open Sans", sans-serif; fill: #fff; }
.letter { font: 700 15px "Open Sans", sans-serif; fill: #fff; }
.tray { display: flex; align-items: center; margin-left: 34.500px; height: 68px; }
.chev { width: 17px; height: 10px; }
.bt { width: 19px; height: 25px; margin-left: 30px; }
.lang { width: 60px; margin-left: 18px; text-align: center; font-size: 17.500px; line-height: 24px; }
.wifi { width: 24px; height: 20px; margin-left: 15px; }
.vol { width: 24px; height: 20px; margin-left: 12px; }
.bat { width: 26px; height: 23px; margin-left: 11px; }
.clock { width: 104px; margin-left: 12px; text-align: right; font-size: 17.500px; line-height: 24px; white-space: nowrap; }
.bell { width: 22px; height: 24px; margin-left: 14px; }
```
